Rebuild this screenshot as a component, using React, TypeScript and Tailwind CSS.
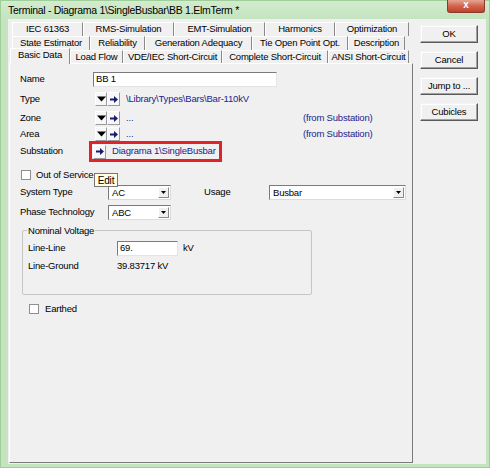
import React from 'react';

const linkColor = 'text-[#23238c]';

function DropBtn() {
  return (
    <div className="w-[12px] h-[14px] bg-[#f7f7f7] border-t border-l border-white border-r border-b border-r-[#9a9a9a] border-b-[#9a9a9a] flex items-center justify-center">
      <svg width="9" height="6" viewBox="0 0 9 6">
        <path d="M0 0.5 L9 0.5 L4.5 5.5 Z" fill="#000" />
      </svg>
    </div>
  );
}

function ArrowBtn() {
  return (
    <div className="w-[13px] h-[14px] bg-[#f7f7f7] border-t border-l border-white border-r border-b border-r-[#9a9a9a] border-b-[#9a9a9a] flex items-center justify-center">
      <svg width="8" height="7" viewBox="0 0 8 7">
        <path d="M0 2.5 H4 V0 L8 3.5 L4 7 V4.5 H0 Z" fill="#1b1b6e" />
      </svg>
    </div>
  );
}

function Select({ value, w }: { value: string; w: string }) {
  return (
    <div className={`${w} h-[15px] bg-white border-t border-l border-[#7a7a7a] border-r border-b border-r-[#dcdcdc] border-b-[#dcdcdc] flex items-center`}>
      <span className="flex-1 pl-[3px] leading-none">{value}</span>
      <div className="w-[11px] h-[11px] mr-[1px] bg-[#f0f0f0] border-t border-l border-white border-r border-b border-r-[#8a8a8a] border-b-[#8a8a8a] flex items-center justify-center">
        <svg width="5" height="3" viewBox="0 0 5 3">
          <path d="M0 0 H5 L2.5 3 Z" fill="#000" />
        </svg>
      </div>
    </div>
  );
}

function CheckBox() {
  return <div className="w-[10px] h-[10px] bg-white border border-[#8e8f8f]" />;
}

function Tab({ label, w, sel }: { label: string; w: string; sel?: boolean }) {
  if (sel) {
    return (
      <div className={`${w} h-[16px] -mb-[1px] relative z-10 bg-[#f0f0f0] border-t border-l border-white border-r border-r-[#8a8a8a] flex items-center justify-center pb-[2px]`}>
        {label}
      </div>
    );
  }
  return (
    <div className={`${w} h-full border-t border-l border-white border-r border-r-[#8a8a8a] flex items-center justify-center`}>
      {label}
    </div>
  );
}

function DlgButton({ label }: { label: string }) {
  return (
    <div className="w-[58px] h-[18px] bg-[#f0f0f0] border-t border-l border-[#f4f4f4] border-r border-b border-r-[#5a5a5a] border-b-[#5a5a5a] shadow-[inset_-1px_-1px_0_#a0a0a0,inset_1px_1px_0_#ffffff] flex items-center justify-center">
      {label}
    </div>
  );
}

export default function App() {
  return (
    <div className="w-[492px] h-[474px] bg-white font-['Liberation_Sans',Arial,sans-serif] text-[9.5px] tracking-[-0.2px] text-black">
      <div className="w-[490px] h-[468px] bg-[#c4e4bf] border border-[#9fcf99] flex flex-col">
        {/* title bar */}
        <div className="h-[18px] flex items-start bg-gradient-to-b from-[#d3ebcf] to-[#c4e4bf]">
          <span className="pl-[7px] pt-[3px] text-[10.5px] tracking-[-0.3px] leading-[13px]">
            Terminal - Diagrama 1\SingleBusbar\BB 1.ElmTerm *
          </span>
          <div className="ml-auto mr-[4px] -mt-[1px] w-[38px] h-[13px] rounded-b-[3px] bg-gradient-to-b from-[#e6a493] via-[#d0654e] to-[#c0402a] border border-[#8c3a2c] border-t-0 flex items-center justify-center">
            <span className="text-white text-[10px] font-bold leading-none -mt-[2px]">x</span>
          </div>
        </div>

        {/* client */}
        <div className="ml-[7px] w-[478px] h-[445px] bg-[#f0f0f0] flex">
          <div className="w-[405px] pl-[1px] pt-[3px] flex flex-col">
            <div className="h-[14px] flex pl-[3px]">
              <Tab label="IEC 61363" w="w-[71px]" />
              <Tab label="RMS-Simulation" w="w-[91px]" />
              <Tab label="EMT-Simulation" w="w-[91px]" />
              <Tab label="Harmonics" w="w-[70px]" />
              <Tab label="Optimization" w="w-[74px]" />
            </div>
            <div className="h-[14px] flex pl-[3px]">
              <Tab label="State Estimator" w="w-[78px]" />
              <Tab label="Reliability" w="w-[55px]" />
              <Tab label="Generation Adequacy" w="w-[107px]" />
              <Tab label="Tie Open Point Opt." w="w-[96px]" />
              <Tab label="Description" w="w-[57px]" />
            </div>
            <div className="h-[13px] flex items-end pl-[1px]">
              <Tab label="Basic Data" w="w-[60px]" sel />
              <Tab label="Load Flow" w="w-[53px]" />
              <Tab label="VDE/IEC Short-Circuit" w="w-[99px]" />
              <Tab label="Complete Short-Circuit" w="w-[106px]" />
              <Tab label="ANSI Short-Circuit" w="w-[81px]" />
            </div>

            {/* panel */}
            <div className="w-[404px] h-[400px] border-t border-l border-white border-r border-b border-r-[#7a7a7a] border-b-[#7a7a7a] pl-[10px] flex flex-col">
              <div className="mt-[8px] h-[15px] flex items-center">
                <span className="w-[73px]">Name</span>
                <div className="w-[184px] h-[15px] bg-white border-t border-l border-[#7a7a7a] border-r border-b border-r-[#e4e4e4] border-b-[#e4e4e4] flex items-center pl-[2px]">
                  BB 1
                </div>
              </div>
              <div className="mt-[5px] h-[14px] flex items-center">
                <span className="w-[75px]">Type</span>
                <DropBtn />
                <ArrowBtn />
                <span className={`ml-[6px] ${linkColor}`}>\Library\Types\Bars\Bar-110kV</span>
              </div>
              <div className="mt-[5px] h-[14px] flex items-center">
                <span className="w-[75px]">Zone</span>
                <DropBtn />
                <ArrowBtn />
                <span className={`ml-[6px] w-[177px] ${linkColor}`}>...</span>
                <span className={linkColor}>(from Substation)</span>
              </div>
              <div className="mt-[2px] h-[14px] flex items-center">
                <span className="w-[75px]">Area</span>
                <DropBtn />
                <ArrowBtn />
                <span className={`ml-[6px] w-[177px] ${linkColor}`}>...</span>
                <span className={linkColor}>(from Substation)</span>
              </div>
              <div className="h-[21px] flex items-center">
                <span className="w-[69px]">Substation</span>
                <div className="w-[133px] h-[21px] border-[3px] border-[#e1222b] flex items-center">
                  <div className="ml-[1px]">
                    <ArrowBtn />
                  </div>
                  <span className={`ml-[6px] ${linkColor}`}>Diagrama 1\SingleBusbar</span>
                </div>
              </div>
              <div className="mt-[8px] h-[10px] flex items-center relative">
                <div className="ml-[1px]">
                  <CheckBox />
                </div>
                <span className="ml-[5px]">Out of Service</span>
                <div className="absolute left-[74px] top-[3px] w-[24px] h-[14px] bg-[#ffffe1] border border-[#767676] flex items-center justify-center text-[10px]">
                  Edit
                </div>
              </div>
              <div className="mt-[5px] h-[15px] flex items-center">
                <span className="w-[88px]">System Type</span>
                <Select value="AC" w="w-[63px]" />
                <span className="ml-[33px] w-[65px]">Usage</span>
                <Select value="Busbar" w="w-[137px]" />
              </div>
              <div className="mt-[5px] h-[15px] flex items-center">
                <span className="w-[88px]">Phase Technology</span>
                <Select value="ABC" w="w-[63px]" />
              </div>

              <div className="mt-[10px] ml-[2px] w-[290px] h-[65px] border border-[#c6c6c6] rounded-[2px] relative flex flex-col pl-[5px]">
                <span className="absolute -top-[7px] left-[4px] px-[1px] bg-[#f0f0f0]">Nominal Voltage</span>
                <div className="mt-[10px] h-[15px] flex items-center">
                  <span className="w-[89px]">Line-Line</span>
                  <div className="w-[61px] h-[15px] bg-white border-t border-l border-[#7a7a7a] border-r border-b border-r-[#e4e4e4] border-b-[#e4e4e4] flex items-center pl-[2px]">
                    69.
                  </div>
                  <span className="ml-[5px]">kV</span>
                </div>
                <div className="mt-[3px] h-[14px] flex items-center">
                  <span className="w-[89px]">Line-Ground</span>
                  <span>39.83717 kV</span>
                </div>
              </div>

              <div className="mt-[9px] h-[10px] flex items-center">
                <div className="ml-[9px]">
                  <CheckBox />
                </div>
                <span className="ml-[6px]">Earthed</span>
              </div>
            </div>
          </div>

          {/* right buttons */}
          <div className="pl-[7px] pt-[6px] flex flex-col gap-[8px]">
            <DlgButton label="OK" />
            <DlgButton label="Cancel" />
            <DlgButton label="Jump to ..." />
            <DlgButton label="Cubicles" />
          </div>
        </div>
      </div>
    </div>
  );
}
